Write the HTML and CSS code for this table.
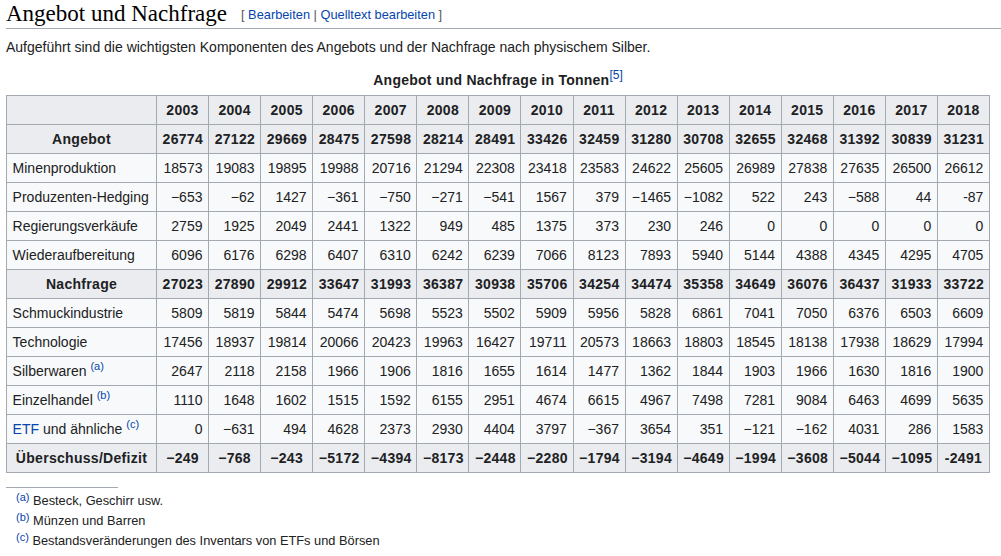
FILE: index.html
```html
<!DOCTYPE html>
<html lang="de">
<head>
<meta charset="utf-8">
<title>Angebot und Nachfrage</title>
<link rel="stylesheet" href="styles.css">
</head>
<body>
<div class="content">
  <h2 class="section-heading">
    <span class="headline">Angebot und Nachfrage</span>
    <span class="editsection"><span class="bracket">[</span> <a href="#">Bearbeiten</a> <span class="divider">|</span> <a href="#">Quelltext bearbeiten</a> <span class="bracket">]</span></span>
  </h2>
  <p class="intro">Aufgeführt sind die wichtigsten Komponenten des Angebots und der Nachfrage nach physischem Silber.</p>

  <table class="wikitable">
    <caption>Angebot und Nachfrage in Tonnen<sup class="ref"><a href="#">[5]</a></sup></caption>
    <colgroup><col class="col-label"></colgroup>
    <thead>
      <tr><th></th><th>2003</th><th>2004</th><th>2005</th><th>2006</th><th>2007</th><th>2008</th><th>2009</th><th>2010</th><th>2011</th><th>2012</th><th>2013</th><th>2014</th><th>2015</th><th>2016</th><th>2017</th><th>2018</th></tr>
    </thead>
    <tbody>
      <tr class="sum"><th>Angebot</th><th>26774</th><th>27122</th><th>29669</th><th>28475</th><th>27598</th><th>28214</th><th>28491</th><th>33426</th><th>32459</th><th>31280</th><th>30708</th><th>32655</th><th>32468</th><th>31392</th><th>30839</th><th>31231</th></tr>
      <tr><td>Minenproduktion</td><td>18573</td><td>19083</td><td>19895</td><td>19988</td><td>20716</td><td>21294</td><td>22308</td><td>23418</td><td>23583</td><td>24622</td><td>25605</td><td>26989</td><td>27838</td><td>27635</td><td>26500</td><td>26612</td></tr>
      <tr><td>Produzenten-Hedging</td><td>−653</td><td>−62</td><td>1427</td><td>−361</td><td>−750</td><td>−271</td><td>−541</td><td>1567</td><td>379</td><td>−1465</td><td>−1082</td><td>522</td><td>243</td><td>−588</td><td>44</td><td>-87</td></tr>
      <tr><td>Regierungsverkäufe</td><td>2759</td><td>1925</td><td>2049</td><td>2441</td><td>1322</td><td>949</td><td>485</td><td>1375</td><td>373</td><td>230</td><td>246</td><td>0</td><td>0</td><td>0</td><td>0</td><td>0</td></tr>
      <tr><td>Wiederaufbereitung</td><td>6096</td><td>6176</td><td>6298</td><td>6407</td><td>6310</td><td>6242</td><td>6239</td><td>7066</td><td>8123</td><td>7893</td><td>5940</td><td>5144</td><td>4388</td><td>4345</td><td>4295</td><td>4705</td></tr>
      <tr class="sum"><th>Nachfrage</th><th>27023</th><th>27890</th><th>29912</th><th>33647</th><th>31993</th><th>36387</th><th>30938</th><th>35706</th><th>34254</th><th>34474</th><th>35358</th><th>34649</th><th>36076</th><th>36437</th><th>31933</th><th>33722</th></tr>
      <tr><td>Schmuckindustrie</td><td>5809</td><td>5819</td><td>5844</td><td>5474</td><td>5698</td><td>5523</td><td>5502</td><td>5909</td><td>5956</td><td>5828</td><td>6861</td><td>7041</td><td>7050</td><td>6376</td><td>6503</td><td>6609</td></tr>
      <tr><td>Technologie</td><td>17456</td><td>18937</td><td>19814</td><td>20066</td><td>20423</td><td>19963</td><td>16427</td><td>19711</td><td>20573</td><td>18663</td><td>18803</td><td>18545</td><td>18138</td><td>17938</td><td>18629</td><td>17994</td></tr>
      <tr><td>Silberwaren <sup class="note"><a href="#">(a)</a></sup></td><td>2647</td><td>2118</td><td>2158</td><td>1966</td><td>1906</td><td>1816</td><td>1655</td><td>1614</td><td>1477</td><td>1362</td><td>1844</td><td>1903</td><td>1966</td><td>1630</td><td>1816</td><td>1900</td></tr>
      <tr><td>Einzelhandel <sup class="note"><a href="#">(b)</a></sup></td><td>1110</td><td>1648</td><td>1602</td><td>1515</td><td>1592</td><td>6155</td><td>2951</td><td>4674</td><td>6615</td><td>4967</td><td>7498</td><td>7281</td><td>9084</td><td>6463</td><td>4699</td><td>5635</td></tr>
      <tr><td><a href="#">ETF</a> und ähnliche <sup class="note"><a href="#">(c)</a></sup></td><td>0</td><td>−631</td><td>494</td><td>4628</td><td>2373</td><td>2930</td><td>4404</td><td>3797</td><td>−367</td><td>3654</td><td>351</td><td>−121</td><td>−162</td><td>4031</td><td>286</td><td>1583</td></tr>
      <tr class="sum"><th>Überschuss/Defizit</th><th>−249</th><th>−768</th><th>−243</th><th>−5172</th><th>−4394</th><th>−8173</th><th>−2448</th><th>−2280</th><th>−1794</th><th>−3194</th><th>−4649</th><th>−1994</th><th>−3608</th><th>−5044</th><th>−1095</th><th>-2491</th></tr>
    </tbody>
  </table>

  <div class="notes">
    <div class="notes-rule"></div>
    <ul class="notes-list">
      <li><sup class="note-mark"><a href="#">(a)</a></sup> Besteck, Geschirr usw.</li>
      <li><sup class="note-mark"><a href="#">(b)</a></sup> Münzen und Barren</li>
      <li><sup class="note-mark"><a href="#">(c)</a></sup> Bestandsveränderungen des Inventars von ETFs und Börsen</li>
    </ul>
  </div>
</div>
</body>
</html>
```

FILE: styles.css
```css
html, body {
  margin: 0;
  padding: 0;
  background: #ffffff;
}

body {
  font-family: "Liberation Sans", Arial, sans-serif;
  font-size: 14px;
  color: #202122;
}

a {
  color: #0645ad;
  text-decoration: none;
}

.content {
  padding: 0 0 0 6px;
}

.section-heading {
  display: flex;
  align-items: center;
  margin: 0;
  padding: 0;
  height: 28px;
  border-bottom: 1px solid #a2a9b1;
  font-weight: normal;
}

.headline {
  font-family: "Liberation Serif", "Times New Roman", serif;
  font-size: 23px;
  line-height: 28px;
  color: #000000;
}

.editsection {
  margin-left: 14px;
  font-family: "Liberation Sans", Arial, sans-serif;
  font-size: 12.8px;
  line-height: 1;
  padding-top: 3px;
  color: #54595d;
}

.intro {
  margin: 7px 0 0;
  line-height: 22px;
}

.wikitable {
  margin-top: 11px;
  border-collapse: collapse;
  table-layout: fixed;
  width: 984px;
  background: #f8f9fa;
  border: 1px solid #a2a9b1;
  line-height: 22px;
}

.wikitable caption {
  font-weight: bold;
  letter-spacing: 0.25px;
  padding-bottom: 4px;
  line-height: 22px;
}

.ref {
  font-size: 12px;
  font-weight: normal;
  letter-spacing: 0;
  line-height: 1;
  vertical-align: 6px;
}

.col-label {
  width: 150px;
}

.wikitable th,
.wikitable td {
  border: 1px solid #a2a9b1;
  padding: 3px 5.6px 3px 5.6px;
  white-space: nowrap;
  height: 22px;
}

.wikitable th {
  background: #eaecf0;
  font-weight: bold;
  letter-spacing: 0.3px;
  text-align: center;
}

.wikitable td {
  text-align: right;
}

.wikitable td:first-child {
  text-align: left;
}

.note {
  font-size: 11px;
  line-height: 1;
  vertical-align: 6px;
}

.notes {
  margin-top: 14px;
}

.notes-rule {
  width: 112px;
  border-top: 1px solid #a2a9b1;
}

.notes-list {
  list-style: none;
  margin: 3px 0 0;
  padding: 0 0 0 10px;
  font-size: 12.8px;
  line-height: 20px;
}

.note-mark {
  font-size: 11px;
  line-height: 1;
  vertical-align: 4px;
}
```
